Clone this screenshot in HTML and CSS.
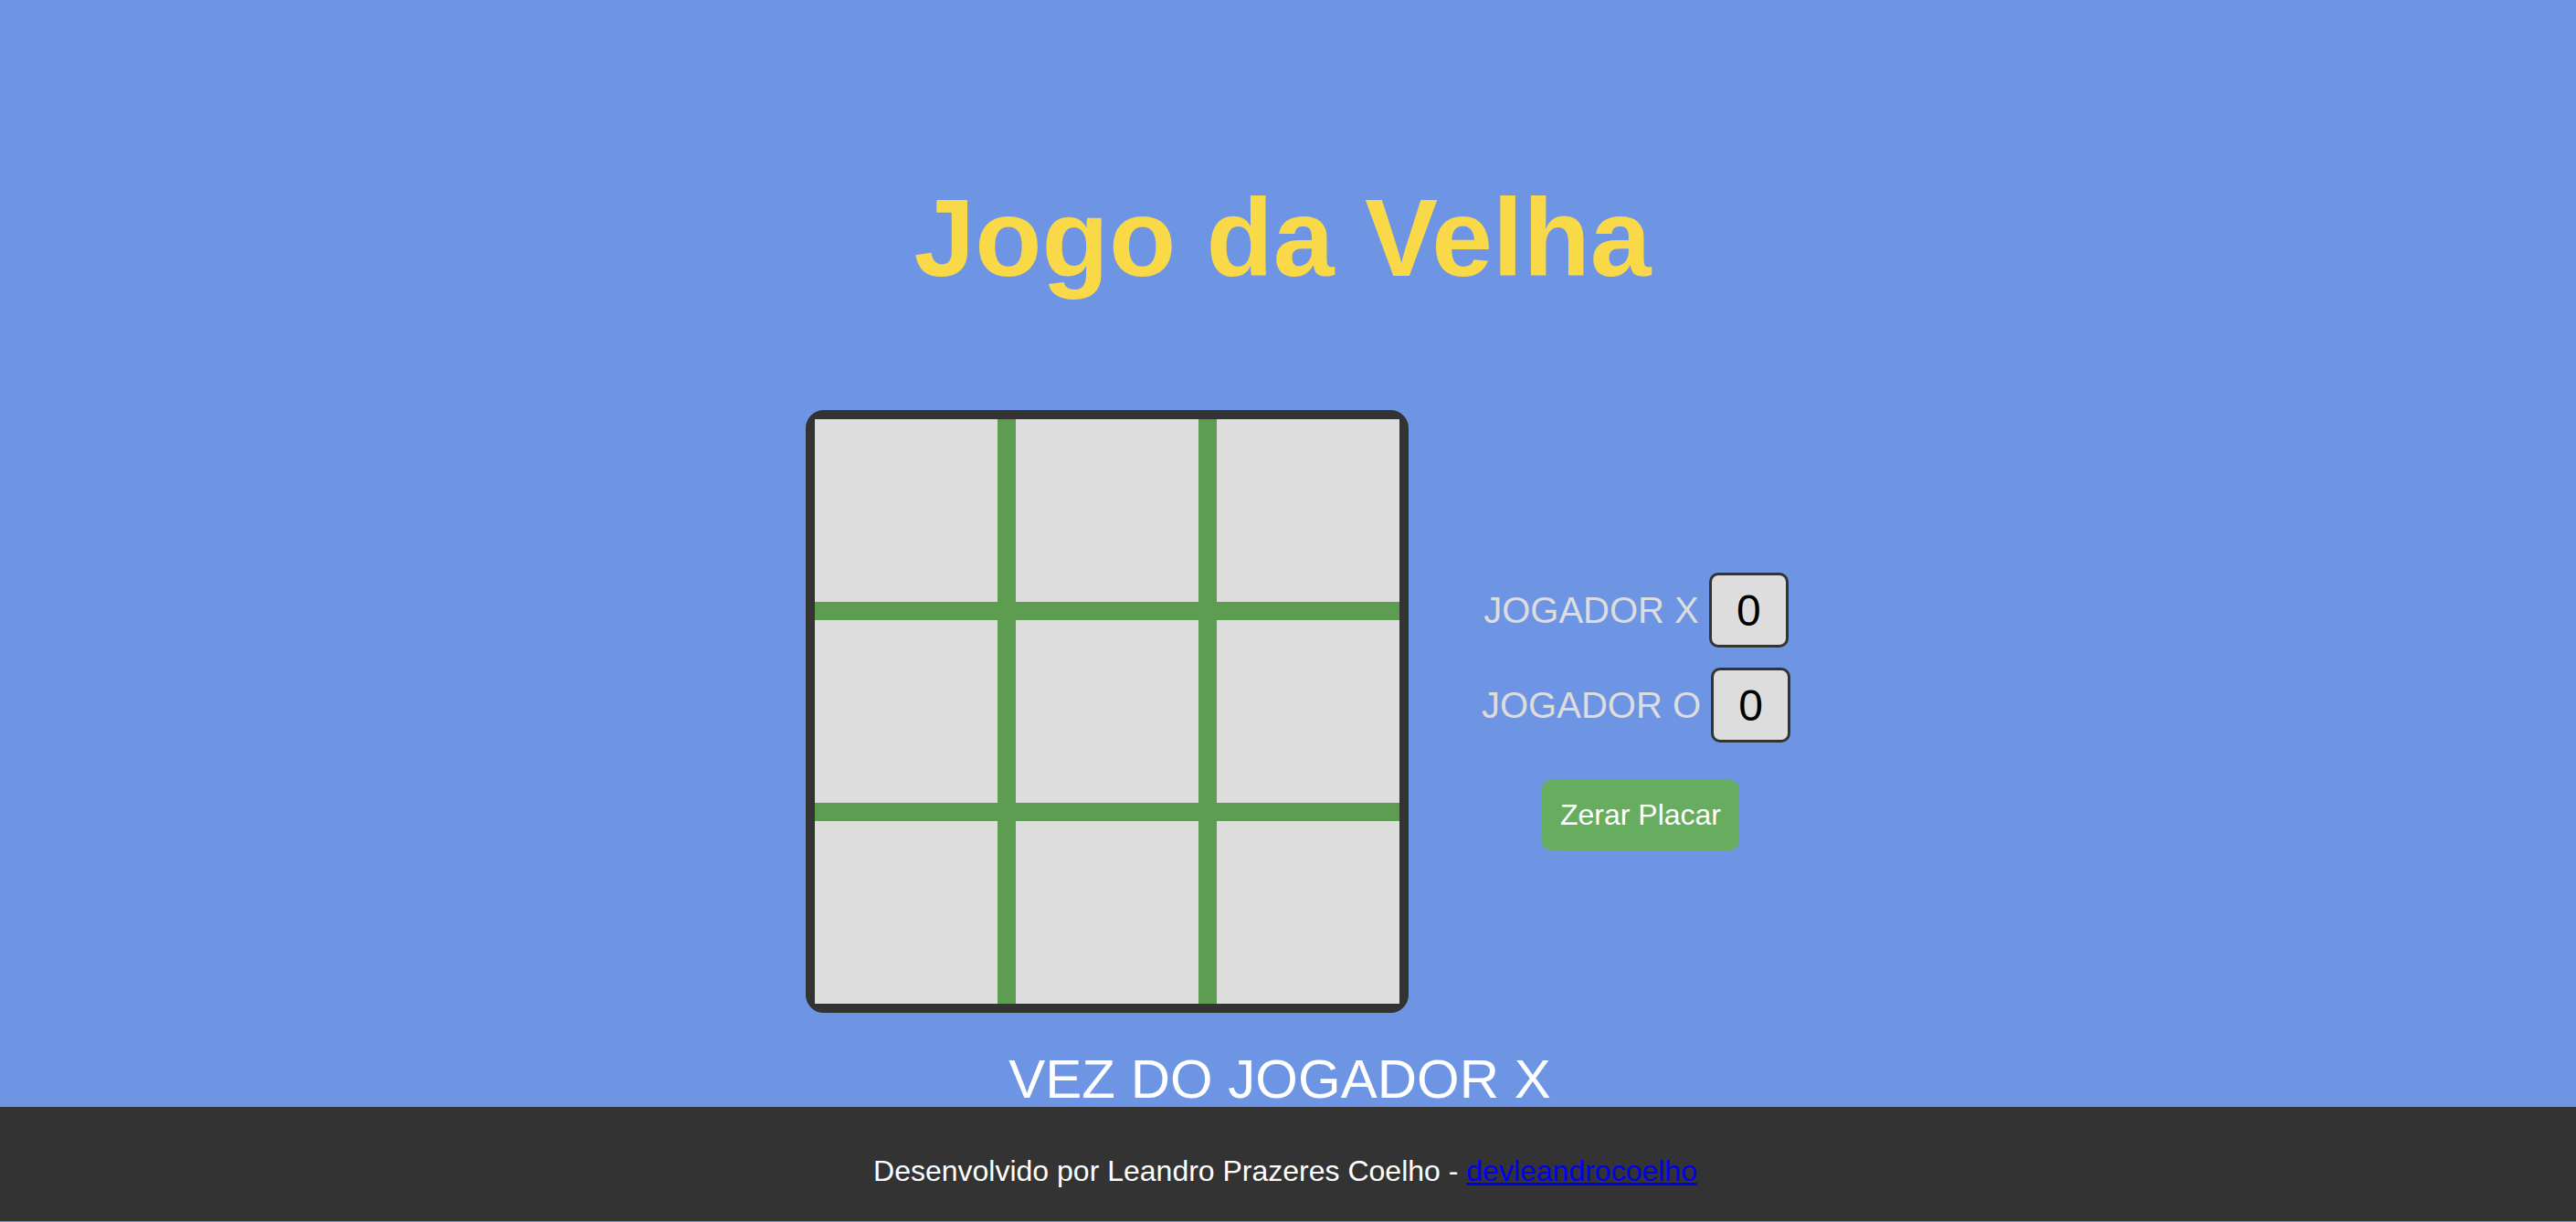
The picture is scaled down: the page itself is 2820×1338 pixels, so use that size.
FILE: index.html
```html
<!DOCTYPE html>
<html lang="pt-BR">
<head>
<meta charset="utf-8">
<title>Jogo da Velha</title>
<link rel="stylesheet" href="styles.css">
</head>
<body>
<main class="main">
  <h1 class="title">Jogo da Velha</h1>
  <div class="game">
    <div class="board">
      <div class="cell"></div><div class="cell"></div><div class="cell"></div>
      <div class="cell"></div><div class="cell"></div><div class="cell"></div>
      <div class="cell"></div><div class="cell"></div><div class="cell"></div>
    </div>
    <div class="panel">
      <div class="score-row"><span class="label">JOGADOR X</span><span class="score">0</span></div>
      <div class="score-row"><span class="label">JOGADOR O</span><span class="score">0</span></div>
      <button class="reset">Zerar Placar</button>
    </div>
  </div>
  <p class="turn">VEZ DO JOGADOR X</p>
</main>
<footer class="footer">Desenvolvido por Leandro Prazeres Coelho - <a class="footer-link" href="#">devleandrocoelho</a></footer>
</body>
</html>
```
FILE: styles.css
```css
body {
  margin: 0;
  background: #6e94e4;
  font-family: "Liberation Sans", Arial, sans-serif;
}

.main {
  padding-top: 191px;
  padding-right: 12px;
}

.title {
  margin: 0;
  text-align: center;
  font-size: 120px;
  line-height: 138px;
  font-weight: bold;
  color: #f9d948;
}

.game {
  display: flex;
  justify-content: center;
  align-items: center;
  margin-top: 120px;
  padding-left: 35px;
}

.board {
  display: grid;
  grid-template-columns: repeat(3, 200px);
  grid-template-rows: repeat(3, 200px);
  gap: 20px;
  background: #5c9d51;
  border: 10px solid #333;
  border-radius: 20px;
}

.cell {
  background: #ddd;
}

.panel {
  width: 340px;
  margin-left: 79px;
  display: flex;
  flex-direction: column;
  align-items: center;
}

.score-row {
  display: flex;
  align-items: center;
  margin-bottom: 22px;
}

.label {
  font-size: 40px;
  color: #ddd;
  margin-right: 11px;
}

.score {
  display: flex;
  align-items: center;
  justify-content: center;
  width: 81px;
  height: 76px;
  border: 3px solid #333;
  border-radius: 10px;
  background: #ddd;
  color: #000;
  font-size: 48px;
}

.reset {
  margin-top: 19px;
  margin-left: 10px;
  padding: 20px;
  border: none;
  border-radius: 10px;
  background: #66ad5f;
  color: #fff;
  font-family: "Liberation Sans", Arial, sans-serif;
  font-size: 32px;
  line-height: normal;
}

.turn {
  margin: 43px 0 0;
  padding-right: 6px;
  text-align: center;
  font-size: 60px;
  line-height: 60px;
  color: #fff;
}

.footer {
  background: #333;
  color: #fff;
  text-align: center;
  font-size: 32px;
  padding: 52px 6px 36px 0;
}

.footer-link {
  color: #0000ee;
}
```
